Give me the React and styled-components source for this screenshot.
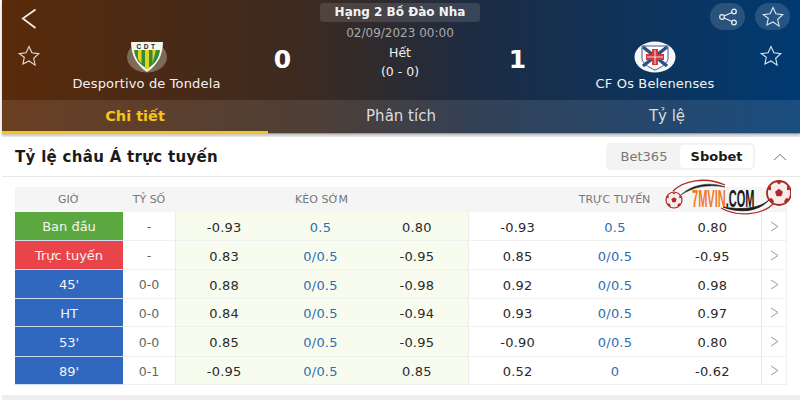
import React from "react";
import styled, { createGlobalStyle } from "styled-components";

const GlobalStyle = createGlobalStyle`
  html, body { margin: 0; padding: 0; background: #fff; }
  body { font-family: "DejaVu Sans", "Open Sans", sans-serif; width: 800px; height: 400px; overflow: hidden; }
`;

const Page = styled.div`
  width: 798px;
  height: 400px;
  margin-left: 2px;
  background: #eeeeee;
  display: flex;
  flex-direction: column;
  position: relative;
`;

const Hero = styled.header`
  height: 134px;
  flex: none;
  background: linear-gradient(90deg, #5a2a0a 0%, #3a2a22 40%, #1c2c44 60%, #003a72 100%);
  color: #fff;
  box-shadow: 0 1px 3px rgba(0, 0, 0, 0.25);
  display: flex;
  flex-direction: column;
`;

const Match = styled.div`
  height: 100px;
  flex: none;
  box-sizing: border-box;
  display: grid;
  grid-template-columns: 227px 107px 128px 107px 1fr;
  padding: 3px 10px 0 0;
`;

const HomeTeam = styled.div`
  display: grid;
  grid-template-columns: 62px 1fr;
`;

const AwaySide = styled.div`
  display: flex;
  flex-direction: column;
`;

const AwayTeam = styled.div`
  display: grid;
  grid-template-columns: 1fr 38px;
`;

const BackBox = styled.div`
  display: flex;
  flex-direction: column;
  padding: 5px 0 0 15px;
  gap: 14px;
`;

const BackIcon = styled.div`
  height: 22px;
  padding-left: 4px;
`;

const TeamInfo = styled.div`
  display: flex;
  flex-direction: column;
  align-items: center;
  padding-top: ${(p) => p.$top}px;
  padding-right: ${(p) => p.$right || 0}px;
  gap: 2px;
`;

const TeamName = styled.div`
  font-size: 13px;
  letter-spacing: 0.15px;
  line-height: 18px;
  color: #f2f2f2;
  white-space: nowrap;
`;

const Score = styled.div`
  font-size: 25px;
  font-weight: 700;
  line-height: 30px;
  padding-top: 42px;
  text-align: center;
`;

const Center = styled.div`
  display: flex;
  flex-direction: column;
  align-items: center;
`;

const League = styled.div`
  width: 160px;
  height: 19px;
  background: rgba(255, 255, 255, 0.12);
  border-radius: 3px;
  font-size: 12px;
  font-weight: 700;
  line-height: 19px;
  text-align: center;
  color: #f4f4f4;
  white-space: nowrap;
`;

const MatchDate = styled.div`
  font-size: 12px;
  line-height: 16px;
  margin: 3px 0 2px;
  color: #a9a9a9;
`;

const Status = styled.div`
  font-size: 12.5px;
  line-height: 19px;
  color: #f0f0f0;
`;

const Actions = styled.div`
  display: flex;
  gap: 10px;
  justify-content: flex-end;
  height: 27px;
`;

const RoundBtn = styled.div`
  width: 35px;
  height: 27px;
  border-radius: 14px;
  background: rgba(255, 255, 255, 0.14);
  display: flex;
  align-items: center;
  justify-content: center;
`;

const StarCol = styled.div`
  padding-top: 14px;
  display: flex;
  justify-content: center;
`;

const Tabs = styled.nav`
  height: 34px;
  flex: none;
  display: grid;
  grid-template-columns: 266px 266px 1fr;
  background: rgba(255, 255, 255, 0.1);
`;

const Tab = styled.div`
  text-align: center;
  font-size: ${(p) => (p.$active ? 14.5 : 15)}px;
  line-height: 32px;
  font-weight: ${(p) => (p.$active ? 700 : 400)};
  color: ${(p) => (p.$active ? "#f5c518" : "#dcdcdc")};
  border-bottom: ${(p) => (p.$active ? 3 : 1)}px solid ${(p) => (p.$active ? "#f5c518" : "#9a9a9a")};
  height: 34px;
  box-sizing: border-box;
`;

const Card = styled.section`
  margin-top: 3px;
  height: 258px;
  flex: none;
  background: #fff;
`;

const CardHead = styled.div`
  height: 40px;
  box-sizing: border-box;
  border-bottom: 1px solid #e8e8e8;
  display: flex;
  align-items: center;
  padding: 0 13px 0 13px;
`;

const CardTitle = styled.h2`
  flex: 1;
  margin: 0;
  font-size: 15px;
  letter-spacing: 0.3px;
  font-weight: 700;
  color: #1a1a1a;
`;

const Switcher = styled.div`
  display: flex;
  height: 27px;
  width: 149px;
  padding: 2px;
  box-sizing: border-box;
  background: #f3f3f3;
  border-radius: 5px;
  margin-right: 18px;
`;

const SwitchItem = styled.div`
  flex: ${(p) => (p.$active ? "0 0 73px" : 1)};
  text-align: center;
  font-size: 13px;
  line-height: 23px;
  border-radius: 4px;
  font-weight: ${(p) => (p.$active ? 700 : 400)};
  color: ${(p) => (p.$active ? "#1a1a1a" : "#777")};
  background: ${(p) => (p.$active ? "#fff" : "transparent")};
`;

const Table = styled.div`
  margin: 10px 0 0 13px;
  width: 772px;
  display: grid;
  grid-template-columns: 108px 52px 293px 293px 26px;
`;

const HeadRow = styled.div`
  grid-column: 1 / -1;
  display: grid;
  grid-template-columns: subgrid;
  height: 25px;
  background: #f5f5f5;
  font-size: 11px;
  line-height: 25px;
  color: #777;
  text-align: center;
`;

const Row = styled.div`
  grid-column: 1 / -1;
  display: grid;
  grid-template-columns: subgrid;
  height: ${(p) => p.$h}px;
  box-sizing: border-box;
  border-bottom: 1px solid #f0f0f0;
`;

const RowLabel = styled.div`
  background: ${(p) => p.$bg};
  color: #f4f4f4;
  font-size: 13px;
  padding-top: 1px;
  display: flex;
  align-items: center;
  justify-content: center;
  margin: 0 0 -1px;
  border-bottom: 1px solid #cfdcef;
`;

const ScoreCell = styled.div`
  display: flex;
  align-items: center;
  justify-content: center;
  padding-top: 1px;
  font-size: 12.5px;
  color: #666;
`;

const Odds = styled.div`
  display: grid;
  grid-template-columns: repeat(3, 1fr);
  align-items: center;
  text-align: center;
  background: ${(p) => (p.$early ? "#f8fcee" : "#fff")};
  border-left: 1px solid #ececec;
  padding: 2px ${(p) => (p.$early ? 3 : 0)}px 0 0;
`;

const Odd = styled.span`
  font-size: 13px;
  letter-spacing: 0.2px;
  color: ${(p) => (p.$blue ? "#2f6db3" : "#2a2a2a")};
`;

const Arrow = styled.div`
  display: flex;
  align-items: center;
  justify-content: center;
  border-left: 1px solid #e6e6e6;
  border-right: 1px solid #f0f0f0;
`;

const Watermark = styled.div`
  position: absolute;
  left: 659px;
  top: 178px;
  width: 130px;
  height: 40px;
`;

const WatermarkText = styled.span`
  position: absolute;
  left: 31px;
  top: 10px;
  font-family: "Liberation Sans", sans-serif;
  font-size: 23px;
  line-height: 22px;
  font-weight: 700;
  white-space: nowrap;
  color: #1a1a1a;
  transform: scaleX(0.48);
  transform-origin: left center;
`;

const WatermarkAccent = styled.span`
  color: #ef7b28;
`;

const Star = ({ size = 24, color = "#e9dcd2" }) => (
  <svg width={size} height={size} viewBox="0 0 24 24" fill="none" stroke={color} strokeWidth="1.1">
    <path d="M12 2.500l2.900 6.300 6.900.8-5.100 4.700 1.400 6.800L12 17l-6.100 3.100 1.400-6.800L2.200 9.600l6.900-.8z" />
  </svg>
);

const Share = () => (
  <svg width="20" height="18" viewBox="0 0 20 18" fill="none" stroke="#e8edf3" strokeWidth="1.3">
    <circle cx="16" cy="3.500" r="2.300" />
    <circle cx="4" cy="9" r="2.300" />
    <circle cx="16" cy="14.500" r="2.300" />
    <path d="M6 8l8-3.500M6 10l8 3.500" />
  </svg>
);

const Back = () => (
  <svg width="16" height="22" viewBox="0 0 16 22" fill="none" stroke="#f5f0ec" strokeWidth="1.7">
    <path d="M14.500 1.500L1.800 10.500l12.700 9.500" />
  </svg>
);

const Chevron = () => (
  <svg width="9" height="11" viewBox="0 0 9 11" fill="none" stroke="#9a9a9a" strokeWidth="1">
    <path d="M1 1l7 4.500L1 10" />
  </svg>
);

const ChevronUp = () => (
  <svg width="14" height="8" viewBox="0 0 14 8" fill="none" stroke="#777" strokeWidth="1">
    <path d="M1 7l6-5.500L13 7" />
  </svg>
);

const TondelaCrest = () => (
  <svg width="42" height="32" viewBox="0 0 42 32">
    <ellipse cx="21" cy="16" rx="20" ry="15.500" fill="#7d6a58" />
    <path d="M5 1h32c0 12-5 23-16 30C10 24 5 13 5 1z" fill="#f4f6f0" />
    <path d="M8 9h26c-1 8-5 14-13 19C13 23 9 17 8 9z" fill="#2f8c3c" />
    <path d="M12 9h3.500v13.500L12 18zM19 9h4v19l-2 .5-2-1zM26.500 9H30l-3.500 13.500z" fill="#e8d21e" />
    <text x="21" y="7.500" textAnchor="middle" fontFamily="Liberation Sans" fontSize="6.500" fontWeight="700" letterSpacing="2.500" fill="#1c1c1c">CDT</text>
  </svg>
);

const BelenensesCrest = () => (
  <svg width="42" height="32" viewBox="0 0 42 32">
    <ellipse cx="21" cy="16" rx="20.500" ry="15.500" fill="#f7f7f7" />
    <path d="M8 5h26v12c0 5-6 9-13 12C14 26 8 22 8 17z" fill="#fff" stroke="#3d5b8c" strokeWidth="1" />
    <path d="M9 6l24 19M33 6L9 25" stroke="#2d4f86" strokeWidth="3.500" />
    <path d="M18 8h6v5h6v6h-6v5h-6v-5h-6v-6h6z" fill="#d23a3a" />
    <path d="M21 9v14M13 16h16" stroke="#fff" strokeWidth="0.8" />
  </svg>
);

const Ball = ({ cx, cy, r }) => (
  <g transform={`translate(${cx} ${cy}) scale(${r / 10})`}>
    <circle r="10" fill="#f8ecec" stroke="#a52a2a" strokeWidth="1.500" />
    <path d="M0-3.500l3.300 2.400-1.300 3.900h-4l-1.300-3.900z" fill="#b32727" />
    <path d="M-2.500-9.500L0-7l2.500-2.500zM7-7l2.500 4-3 .8zM-7-7l-2.500 4 3 .8zM5.500 8l3.500-3-3-.8-2 3zM-5.500 8l-3.500-3 3-.8 2 3z" fill="#b32727" />
  </g>
);

const WatermarkArt = () => (
  <svg width="130" height="40" viewBox="0 0 130 40" fill="none">
    <path d="M12 13C22 3 44-2 64 7" stroke="#b02a2a" strokeWidth="1.300" />
    <path d="M20 17C30 7 48 3 64 9C46 6 32 9 20 17z" fill="#1a1a1a" stroke="#1a1a1a" strokeWidth="0.5" />
    <path d="M60 30C76 39 102 38 114 24" stroke="#b02a2a" strokeWidth="1.200" />
    <path d="M62 29C80 36 98 33 108 22C98 31 80 32 62 29z" fill="#1a1a1a" stroke="#1a1a1a" strokeWidth="0.8" />
    <Ball cx={13} cy={22} r={8} />
    <Ball cx={118} cy={15} r={12} />
  </svg>
);

const rows = [
  { label: "Ban đầu", bg: "#5aa83f", score: "-", h: 29, early: ["-0.93", "0.5", "0.80"], live: ["-0.93", "0.5", "0.80"] },
  { label: "Trực tuyến", bg: "#e9444a", score: "-", h: 29, early: ["0.83", "0/0.5", "-0.95"], live: ["0.85", "0/0.5", "-0.95"] },
  { label: "45'", bg: "#3068c0", score: "0-0", h: 29, early: ["0.88", "0/0.5", "-0.98"], live: ["0.92", "0/0.5", "0.98"] },
  { label: "HT", bg: "#3068c0", score: "0-0", h: 28, early: ["0.84", "0/0.5", "-0.94"], live: ["0.93", "0/0.5", "0.97"] },
  { label: "53'", bg: "#3068c0", score: "0-0", h: 30, early: ["0.85", "0/0.5", "-0.95"], live: ["-0.90", "0/0.5", "0.80"] },
  { label: "89'", bg: "#3068c0", score: "0-1", h: 28, early: ["-0.95", "0/0.5", "0.85"], live: ["0.52", "0", "-0.62"] },
];

const OddsCells = ({ values, early }) => (
  <Odds $early={early}>
    {values.map((v, i) => (
      <Odd key={i} $blue={i === 1}>{v}</Odd>
    ))}
  </Odds>
);

export default function App() {
  return (
    <Page>
      <GlobalStyle />
      <Hero>
        <Match>
          <HomeTeam>
            <BackBox>
              <BackIcon>
                <Back />
              </BackIcon>
              <Star />
            </BackBox>
            <TeamInfo $top={38}>
              <TondelaCrest />
              <TeamName>Desportivo de Tondela</TeamName>
            </TeamInfo>
          </HomeTeam>
          <Score>0</Score>
          <Center>
            <League>Hạng 2 Bồ Đào Nha</League>
            <MatchDate>02/09/2023 00:00</MatchDate>
            <Status>Hết</Status>
            <Status>(0 - 0)</Status>
          </Center>
          <Score>1</Score>
          <AwaySide>
            <Actions>
              <RoundBtn>
                <Share />
              </RoundBtn>
              <RoundBtn>
                <Star color="#dfe8f0" />
              </RoundBtn>
            </Actions>
            <AwayTeam>
              <TeamInfo $top={11} $right={13}>
                <BelenensesCrest />
                <TeamName>CF Os Belenenses</TeamName>
              </TeamInfo>
              <StarCol>
                <Star color="#dfe8f0" />
              </StarCol>
            </AwayTeam>
          </AwaySide>
        </Match>
        <Tabs>
          <Tab $active>Chi tiết</Tab>
          <Tab>Phân tích</Tab>
          <Tab>Tỷ lệ</Tab>
        </Tabs>
      </Hero>
      <Card>
        <CardHead>
          <CardTitle>Tỷ lệ châu Á trực tuyến</CardTitle>
          <Switcher>
            <SwitchItem>Bet365</SwitchItem>
            <SwitchItem $active>Sbobet</SwitchItem>
          </Switcher>
          <ChevronUp />
        </CardHead>
        <Table>
          <HeadRow>
            <span>GIỜ</span>
            <span>TỶ SỐ</span>
            <span>KÈO SỚM</span>
            <span>TRỰC TUYẾN</span>
            <span />
          </HeadRow>
          {rows.map((r) => (
            <Row key={r.label} $h={r.h}>
              <RowLabel $bg={r.bg}>{r.label}</RowLabel>
              <ScoreCell>{r.score}</ScoreCell>
              <OddsCells values={r.early} early />
              <OddsCells values={r.live} />
              <Arrow>
                <Chevron />
              </Arrow>
            </Row>
          ))}
        </Table>
      </Card>
      <Watermark>
        <WatermarkArt />
        <WatermarkText>
          <WatermarkAccent>7MVIN</WatermarkAccent>.COM
        </WatermarkText>
      </Watermark>
    </Page>
  );
}
